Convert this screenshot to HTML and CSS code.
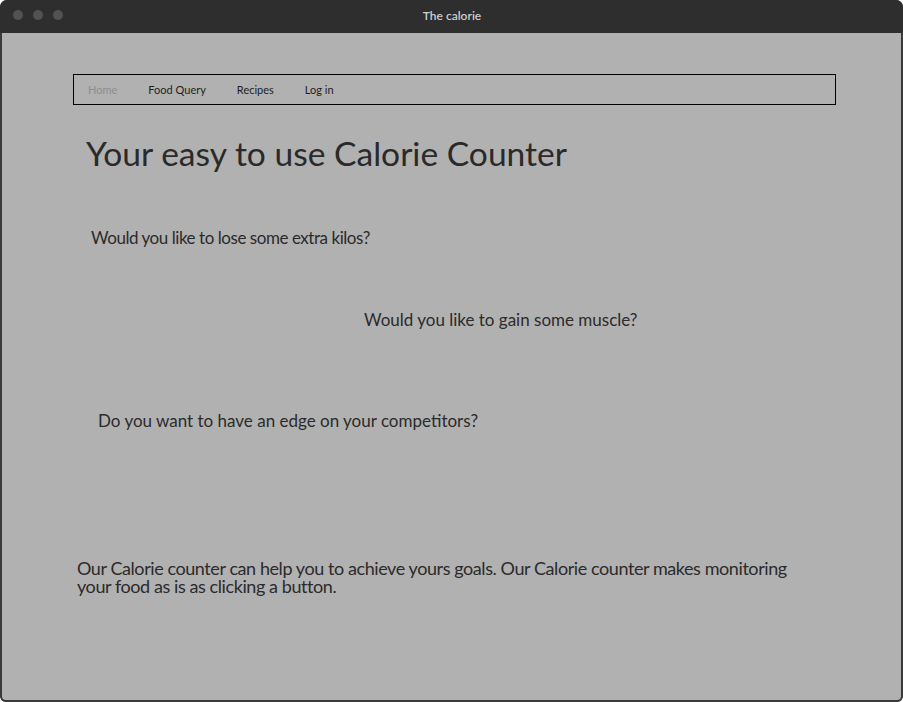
FILE: index.html
```html
<!DOCTYPE html>
<html>
<head>
<meta charset="utf-8">
<title>The calorie</title>
<link rel="stylesheet" href="styles.css">
</head>
<body>
<div class="window">
  <div class="titlebar">
    <div class="lights"><span class="dot"></span><span class="dot"></span><span class="dot"></span></div>
    <div class="title">The calorie</div>
  </div>
  <div class="content">
    <nav class="nav">
      <a class="nav-item active">Home</a>
      <a class="nav-item">Food Query</a>
      <a class="nav-item">Recipes</a>
      <a class="nav-item">Log in</a>
    </nav>
    <h1 class="headline">Your easy to use Calorie Counter</h1>
    <p class="q q1">Would you like to lose some extra kilos?</p>
    <p class="q q2">Would you like to gain some muscle?</p>
    <p class="q q3">Do you want to have an edge on your competitors?</p>
    <p class="para">Our Calorie counter can help you to achieve yours goals. Our Calorie counter makes monitoring your food as is as clicking a button.</p>
  </div>
</div>
</body>
</html>
```
FILE: styles.css
```css
html, body {
  margin: 0;
  padding: 0;
  background: #ffffff;
}
body {
  font-family: "Lato", "Open Sans", sans-serif;
  color: #2b2b2b;
}
.window {
  width: 903px;
  height: 702px;
  display: flex;
  flex-direction: column;
  border-radius: 7px 7px 6px 6px;
  overflow: hidden;
  background: #2e2e2e;
}
.titlebar {
  height: 33px;
  flex: 0 0 33px;
  position: relative;
  display: flex;
  align-items: center;
  justify-content: center;
  background: #2e2e2e;
}
.lights {
  position: absolute;
  left: 13px;
  top: 10px;
  display: flex;
  gap: 10px;
}
.dot {
  width: 10px;
  height: 10px;
  border-radius: 50%;
  background: #525252;
}
.title {
  color: #cdcdcd;
  font-size: 12px;
  font-weight: 600;
  margin: 0 0 2px 1px;
}
.content {
  flex: 1;
  background: #b1b1b1;
  border: 2px solid #3a3a3a;
  border-top: 0;
  border-radius: 0 0 6px 6px;
  display: flex;
  flex-direction: column;
  align-items: flex-start;
}
.nav {
  align-self: stretch;
  margin: 41px 65px 0 71px;
  height: 29px;
  border: 1.5px solid #000;
  display: flex;
  align-items: center;
  padding-left: 14px;
  gap: 31px;
}
.nav-item {
  font-size: 11px;
  color: #1e1e1e;
  padding-top: 0;
}
.nav-item.active {
  color: #8e8e8e;
}
.headline {
  margin: 26px 0 0 84px;
  font-size: 33.6px;
  font-weight: 400;
  line-height: 44px;
  color: #2a2a2a;
}
.q {
  font-size: 17px;
  line-height: 22px;
  margin: 0;
  color: #2b2b2b;
}
.q1 { margin: 52px 0 0 89px; letter-spacing: -0.45px; }
.q2 { margin: 60px 0 0 362px; }
.q3 { margin: 79px 0 0 96px; }
.para {
  margin: 127px 0 0 75px;
  width: 740px;
  font-size: 18px;
  line-height: 18px;
  letter-spacing: -0.42px;
  color: #2b2b2b;
}
```
